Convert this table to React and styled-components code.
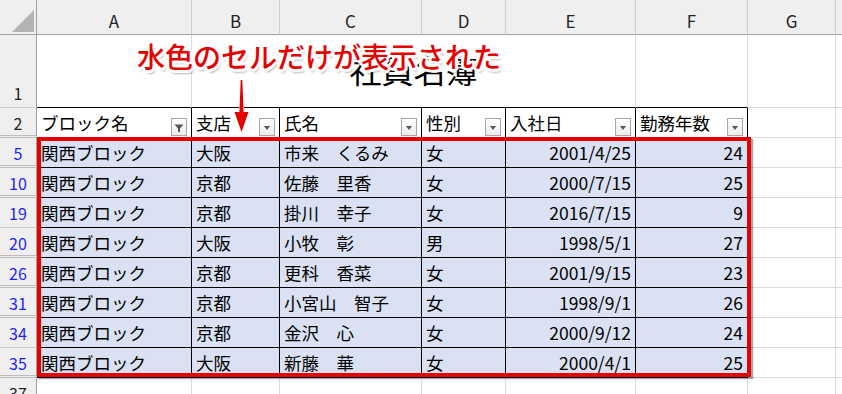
import React from 'react';
import styled, { createGlobalStyle } from 'styled-components';

const Global = createGlobalStyle`
  html, body { margin: 0; padding: 0; background: #fff; }
  body {
    width: 842px; height: 394px; overflow: hidden;
    font-family: "Noto Sans CJK JP", "Noto Sans", sans-serif;
  }
`;

const W = { rh: 37, A: 155, B: 88, C: 142, D: 84, E: 130, F: 112, G: 88, H: 120 };
const GRID = '#dadada';
const RED = '#e60000';

const Page = styled.div`
  position: relative;
  width: 842px;
  height: 394px;
  overflow: hidden;
  background: #fff;
`;

const Row = styled.div`
  display: flex;
  height: ${p => p.$h}px;
`;

const Corner = styled.div`
  box-sizing: border-box;
  flex: none;
  width: ${W.rh}px;
  height: 100%;
  background: #efefef;
  border-right: 1px solid #9f9f9f;
  border-bottom: 1px solid #9f9f9f;
  display: flex;
  align-items: flex-end;
  justify-content: flex-end;
  padding: 0 2px 2px 0;
`;

const ColHead = styled.div`
  box-sizing: border-box;
  flex: none;
  width: ${p => p.$w}px;
  height: 100%;
  background: #efefef;
  border-right: 1px solid #cdcdcd;
  border-bottom: 1px solid #9f9f9f;
  display: flex;
  align-items: center;
  justify-content: center;
  padding-top: 6px;
  font-size: 17px;
  line-height: 1;
  color: #222;
`;

const RowHead = styled.div`
  box-sizing: border-box;
  flex: none;
  width: ${W.rh}px;
  height: 100%;
  background: #efefef;
  border-right: 1px solid #9f9f9f;
  border-bottom: ${p => (p.$gap ? '3px double #bdbdbd' : '1px solid #cdcdcd')};
  display: flex;
  align-items: flex-end;
  justify-content: center;
  padding-bottom: ${p => (p.$gap ? 4 : 6)}px;
  font-size: 16px;
  line-height: 1;
  color: ${p => (p.$blue ? '#1f1fff' : '#222')};
`;

const Cell = styled.div`
  box-sizing: border-box;
  flex: none;
  width: ${p => p.$w}px;
  height: 100%;
  background: ${p => (p.$fill ? '#d9e1f2' : '#fff')};
  border-right: 1px solid ${p => (p.$r ? '#000' : GRID)};
  border-bottom: 1px solid ${p => (p.$b ? '#000' : GRID)};
  display: flex;
  align-items: center;
  justify-content: ${p => (p.$num ? 'flex-end' : 'flex-start')};
  padding: 1px ${p => (p.$num ? 4 : 0)}px 0 ${p => (p.$num ? 0 : 4)}px;
  font-size: 17.5px;
  line-height: 1;
  color: #000;
  white-space: pre;
  overflow: hidden;
`;

const TitleCell = styled(Cell)`
  align-items: flex-end;
  justify-content: center;
  padding: 0 0 22px 0;
  font-size: 32px;
`;

const HeadCell = styled(Cell)`
  justify-content: space-between;
`;

const FilterBtn = styled.span`
  flex: none;
  align-self: flex-end;
  box-sizing: border-box;
  width: 16px;
  height: 18px;
  margin: 0 4px 1px auto;
  border: 1px solid #a8a8a8;
  background: linear-gradient(#ffffff, #ebebeb);
  display: flex;
  align-items: center;
  justify-content: center;
  padding-top: 2px;
`;

const Tri = styled.span`
  width: 0;
  height: 0;
  border-left: 3.5px solid transparent;
  border-right: 3.5px solid transparent;
  border-top: 4px solid #555;
`;

const Callout = styled.div`
  position: absolute;
  left: 137px;
  top: 42px;
  font-size: 28px;
  line-height: 1;
  font-weight: 500;
  color: ${RED};
  white-space: nowrap;
  text-shadow:
    2px 0 #fff, -2px 0 #fff, 0 2px #fff, 0 -2px #fff,
    2px 2px #fff, -2px -2px #fff, 2px -2px #fff, -2px 2px #fff,
    3px 1px #fff, -3px 1px #fff, 1px 3px #fff, 1px -3px #fff,
    2px 4px 2px rgba(0, 0, 0, 0.28);
`;

const ArrowSvg = styled.svg`
  position: absolute;
  left: 232px;
  top: 76px;
  overflow: visible;
`;

const Highlight = styled.div`
  position: absolute;
  left: 37px;
  top: 137px;
  width: 714px;
  height: 240px;
  box-sizing: border-box;
  border: 4px solid ${RED};
  box-shadow: 2px 2px 1px rgba(0, 0, 0, 0.35);
  pointer-events: none;
`;

const Funnel = () => (
  <svg width="10" height="9" viewBox="0 0 10 9">
    <path d="M0.5 0.5 H9.5 L6 4.5 V8.5 L4 7.5 V4.5 Z" fill="#555" />
  </svg>
);

const CornerTri = () => (
  <svg width="22" height="22" viewBox="0 0 22 22">
    <polygon points="22,0 22,22 0,22" fill="#b3b3b3" />
  </svg>
);

const data = [
  ['5', '大阪', '市来　くるみ', '女', '2001/4/25', '24'],
  ['10', '京都', '佐藤　里香', '女', '2000/7/15', '25'],
  ['19', '京都', '掛川　幸子', '女', '2016/7/15', '9'],
  ['20', '大阪', '小牧　彰', '男', '1998/5/1', '27'],
  ['26', '京都', '更科　香菜', '女', '2001/9/15', '23'],
  ['31', '京都', '小宮山　智子', '女', '1998/9/1', '26'],
  ['34', '京都', '金沢　心', '女', '2000/9/12', '24'],
  ['35', '大阪', '新藤　華', '女', '2000/4/1', '25'],
];
const gapAfter = { '5': true, '10': true, '19': false, '20': true, '26': true, '31': true, '34': false, '35': true };

const headers = [
  ['A', 'ブロック名', true],
  ['B', '支店'],
  ['C', '氏名'],
  ['D', '性別'],
  ['E', '入社日'],
  ['F', '勤務年数'],
];

export default function App() {
  return (
    <Page>
      <Global />
      <Row $h={35}>
        <Corner><CornerTri /></Corner>
        {['A', 'B', 'C', 'D', 'E', 'F', 'G', 'H'].map(c => (
          <ColHead key={c} $w={W[c]}>{c === 'H' ? '' : c}</ColHead>
        ))}
      </Row>
      <Row $h={73}>
        <RowHead>1</RowHead>
        <Cell $w={W.A} $b />
        <TitleCell $w={W.B + W.C + W.D + W.E} $b>社員名簿</TitleCell>
        <Cell $w={W.F} $b />
        <Cell $w={W.G} />
        <Cell $w={W.H} />
      </Row>
      <Row $h={30}>
        <RowHead $gap>2</RowHead>
        {headers.map(([c, label, filtered]) => (
          <HeadCell key={c} $w={W[c]} $r $b>
            <span>{label}</span>
            <FilterBtn>{filtered ? <Funnel /> : <Tri />}</FilterBtn>
          </HeadCell>
        ))}
        <Cell $w={W.G} />
        <Cell $w={W.H} />
      </Row>
      {data.map(([n, b, name, sex, date, yrs]) => (
        <Row key={n} $h={30}>
          <RowHead $blue $gap={gapAfter[n]}>{n}</RowHead>
          <Cell $w={W.A} $r $b $fill>関西ブロック</Cell>
          <Cell $w={W.B} $r $b $fill>{b}</Cell>
          <Cell $w={W.C} $r $b $fill>{name}</Cell>
          <Cell $w={W.D} $r $b $fill>{sex}</Cell>
          <Cell $w={W.E} $r $b $fill $num>{date}</Cell>
          <Cell $w={W.F} $r $b $fill $num>{yrs}</Cell>
          <Cell $w={W.G} />
          <Cell $w={W.H} />
        </Row>
      ))}
      <Row $h={30}>
        <RowHead>37</RowHead>
        {['A', 'B', 'C', 'D', 'E', 'F', 'G', 'H'].map(c => (
          <Cell key={c} $w={W[c]} />
        ))}
      </Row>
      <Highlight />
      <Callout>水色のセルだけが表示された</Callout>
      <ArrowSvg width="19" height="58" viewBox="0 0 19 58">
        <polygon
          points="8.7,4 10.3,4 11.6,36 16.5,36 9.5,56 2.5,36 7.4,36"
          fill={RED}
          stroke="#fff"
          strokeWidth="1"
          strokeLinejoin="round"
          paintOrder="stroke"
        />
      </ArrowSvg>
    </Page>
  );
}
